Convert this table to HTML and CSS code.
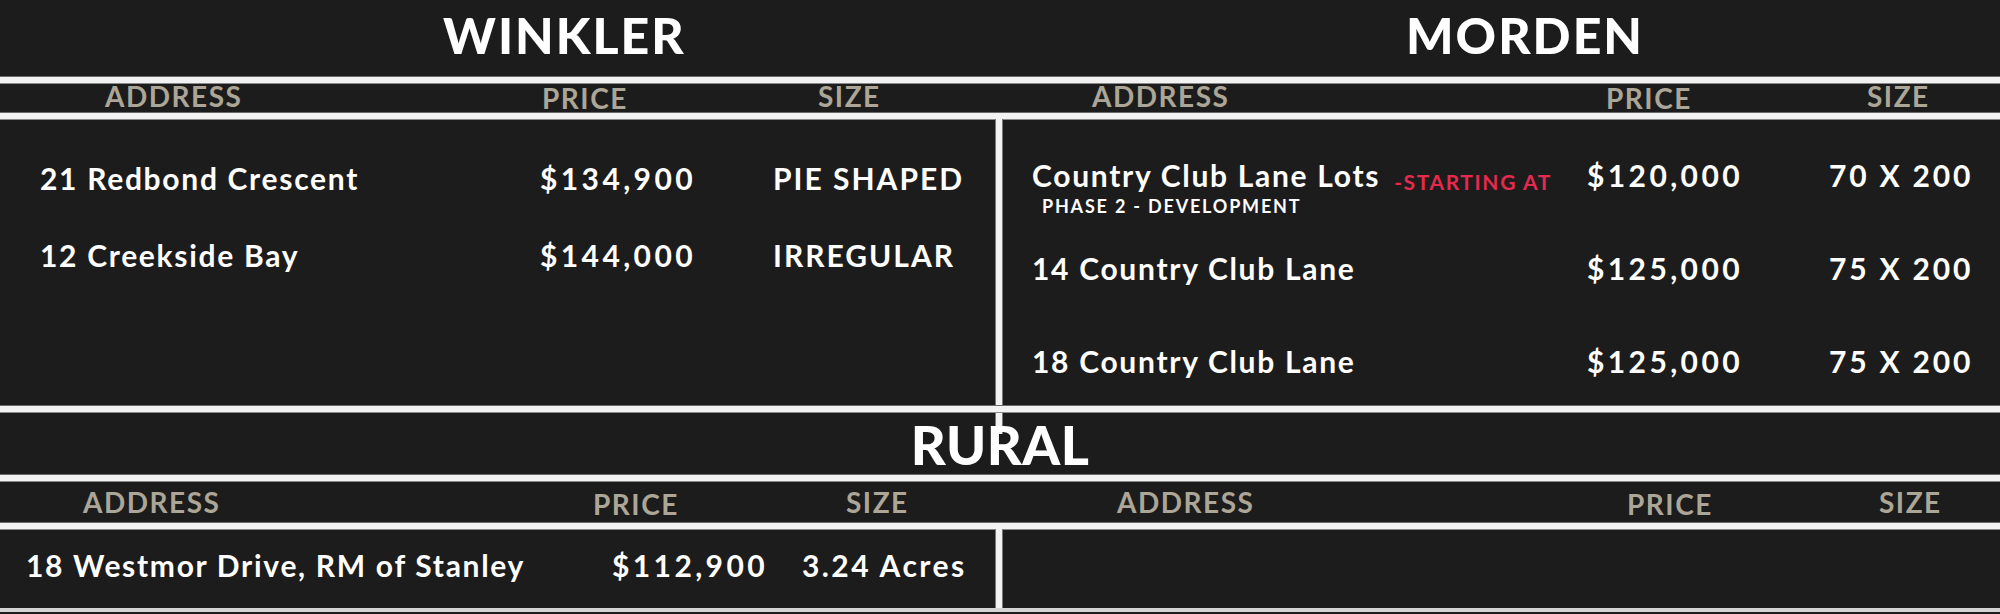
FILE: index.html
```html
<!DOCTYPE html>
<html lang="en">
<head>
<meta charset="utf-8">
<title>Lots for sale</title>
<link rel="stylesheet" href="styles.css">
</head>
<body>
<main class="board">
  <div class="split titles">
    <h1 class="title title-winkler">WINKLER</h1>
    <div></div>
    <h1 class="title title-morden">MORDEN</h1>
  </div>
  <div class="rule"></div>
  <div class="split heads">
    <div class="cols head-wl"><span>ADDRESS</span><span class="hp">PRICE</span><span>SIZE</span></div>
    <div></div>
    <div class="cols head-md"><span>ADDRESS</span><span class="hp">PRICE</span><span>SIZE</span></div>
  </div>
  <div class="rule"></div>
  <div class="split body-top">
    <div class="panel panel-wl">
      <div class="cols row-wl"><span class="addr">21 Redbond Crescent</span><span class="price">$134,900</span><span class="size">PIE SHAPED</span></div>
      <div class="cols row-wl"><span class="addr">12 Creekside Bay</span><span class="price">$144,000</span><span class="size">IRREGULAR</span></div>
    </div>
    <div class="vdiv"></div>
    <div class="panel panel-md">
      <div class="row-md">
        <div class="cols cols-md"><span class="addr">Country Club Lane Lots<em class="starting">-STARTING AT</em></span><span class="price">$120,000</span><span class="size">70 X 200</span></div>
        <div class="phase">PHASE 2 - DEVELOPMENT</div>
      </div>
      <div class="row-md">
        <div class="cols cols-md"><span class="addr">14 Country Club Lane</span><span class="price">$125,000</span><span class="size">75 X 200</span></div>
      </div>
      <div class="row-md">
        <div class="cols cols-md"><span class="addr">18 Country Club Lane</span><span class="price">$125,000</span><span class="size">75 X 200</span></div>
      </div>
    </div>
  </div>
  <div class="rule"></div>
  <div class="rural-title">
    <h1 class="title title-rural">RURAL</h1>
  </div>
  <div class="rule"></div>
  <div class="split heads-rural">
    <div class="cols head-rl"><span>ADDRESS</span><span class="hp">PRICE</span><span>SIZE</span></div>
    <div></div>
    <div class="cols head-rr"><span>ADDRESS</span><span class="hp">PRICE</span><span>SIZE</span></div>
  </div>
  <div class="rule"></div>
  <div class="split body-rural">
    <div class="panel panel-rl">
      <div class="cols row-rl"><span class="addr">18 Westmor Drive, RM of Stanley</span><span class="price">$112,900</span><span class="size">3.24 Acres</span></div>
    </div>
    <div class="vdiv"></div>
    <div class="panel"></div>
  </div>
  <div class="rule rule-bottom"></div>
</main>
</body>
</html>
```
FILE: styles.css
```css
html, body {
  margin: 0;
  padding: 0;
  background: #1d1c1c;
}
body {
  width: 2000px;
  height: 614px;
  overflow: hidden;
  font-family: "Lato", "Liberation Sans", sans-serif;
  color: #ffffff;
}
.board {
  display: flex;
  flex-direction: column;
}
.split {
  display: grid;
  grid-template-columns: 996px 6px 1fr;
}
.rule {
  height: 6px;
  background: #f2f2f2;
  box-shadow: 0 1px 0 #8a8a8a, 0 -1px 0 #6a6a6a;
}
.rule-bottom {
  height: 4px;
  background: #d4d4d4;
  box-shadow: none;
}

/* titles */
.titles {
  height: 77px;
}
.title {
  margin: 0;
  font-weight: 900;
  font-size: 50px;
  line-height: 60px;
  letter-spacing: 2px;
  color: #ffffff;
}
.title-winkler {
  padding: 5px 0 0 443px;
}
.title-morden {
  padding: 5px 0 0 404px;
}
.rural-title {
  height: 63px;
  display: flex;
  justify-content: center;
}
.title-rural {
  font-size: 54px;
  line-height: 64px;
  padding-top: 1px;
  letter-spacing: 0.5px;
}

/* column rows */
.cols {
  display: grid;
}
.heads {
  height: 30px;
}
.heads .cols, .heads-rural .cols {
  font-weight: 700;
  font-size: 28px;
  color: #aba697;
  letter-spacing: 1.5px;
}
.heads .cols {
  line-height: 30px;
  margin-top: -2px;
}
.hp {
  position: relative;
  top: 2px;
}
.head-wl {
  padding-left: 105px;
  grid-template-columns: 437px 276px 1fr;
}
.head-md {
  padding-left: 90px;
  grid-template-columns: 514px 261px 1fr;
}
.heads-rural {
  height: 42px;
}
.heads-rural .cols {
  line-height: 42px;
}
.head-rl {
  padding-left: 83px;
  grid-template-columns: 510px 253px 1fr;
}
.head-rr {
  padding-left: 115px;
  grid-template-columns: 510px 252px 1fr;
}

/* bodies */
.body-top {
  height: 287px;
}
.vdiv {
  background: #f2f2f2;
  box-shadow: 1px 0 0 #777, -1px 0 0 #777;
}
.panel {
  font-weight: 700;
  font-size: 30px;
  line-height: 40px;
  white-space: nowrap;
}
.addr {
  letter-spacing: 1.7px;
}
.price {
  letter-spacing: 3.4px;
}
.size {
  letter-spacing: 2px;
}
.panel-wl {
  padding-top: 39px;
  display: flex;
  flex-direction: column;
  gap: 37px;
}
.row-wl {
  padding-left: 40px;
  grid-template-columns: 500px 233px 1fr;
}
.panel-md {
  padding-top: 36px;
}
.row-md {
  height: 93px;
}
.cols-md {
  padding-left: 30px;
  grid-template-columns: 555px 242px 1fr;
}
.cols-md .size {
  letter-spacing: 2.8px;
}
.starting {
  font-style: normal;
  font-size: 21px;
  line-height: 20px;
  color: #e5294f;
  margin-left: 14px;
  position: relative;
  top: 3px;
  letter-spacing: 1.6px;
}
.phase {
  font-size: 18px;
  line-height: 22px;
  padding-left: 40px;
  letter-spacing: 1.8px;
}
.body-rural {
  height: 79px;
}
.panel-rl {
  padding-top: 16px;
}
.row-rl {
  padding-left: 26px;
  grid-template-columns: 586px 190px 1fr;
}
.row-rl .size {
  letter-spacing: 2.4px;
}
```
